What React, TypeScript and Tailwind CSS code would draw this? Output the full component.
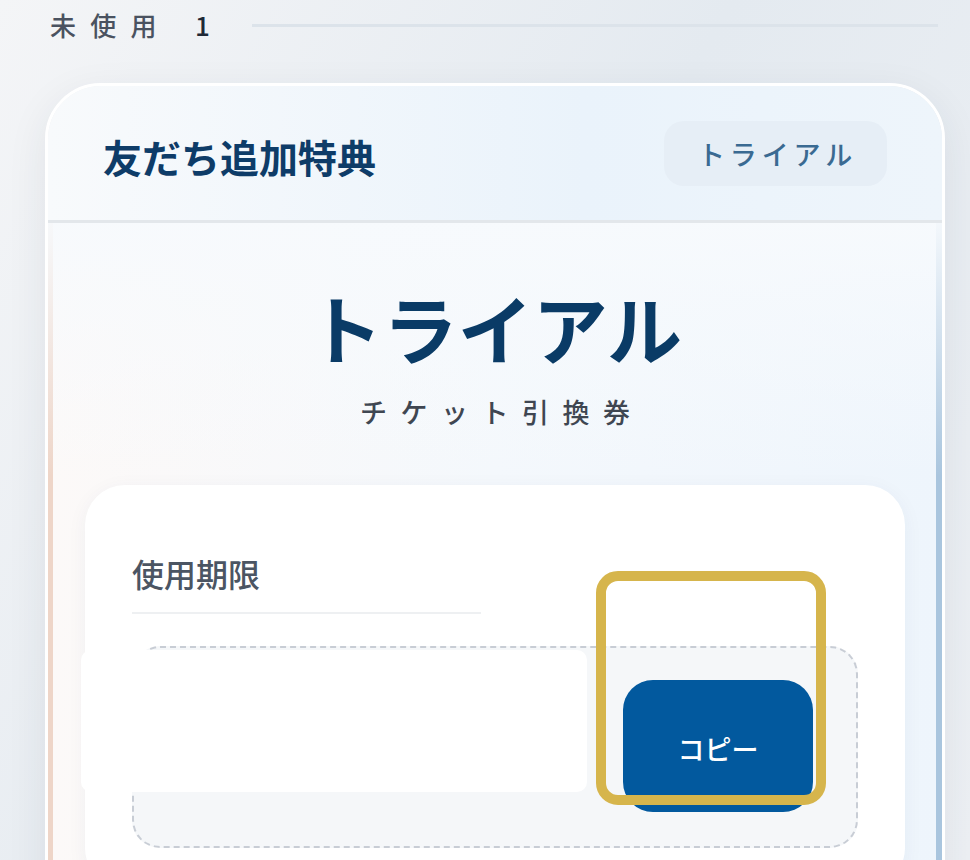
import React from "react";

const jp = { fontFamily: '"Noto Sans CJK JP", "Noto Sans", sans-serif' };

export default function App() {
  return (
    <div
      className="relative w-[970px] h-[860px] overflow-hidden bg-[linear-gradient(120deg,#f4f5f7_0%,#e4eaf0_50%,#edf0f4_100%)]"
      style={jp}
    >
      {/* status row */}
      <div className="flex items-center h-[50px] pl-[50px] pr-[32px]">
        <span className="text-[26px] font-medium tracking-[0.55em] text-[#4a5260] leading-none">未使用</span>
        <span className="ml-[24px] text-[26px] font-medium text-[#1f2937] leading-none">1</span>
        <div className="ml-[42px] flex-1 h-[3px] bg-[#dce3ea]" />
      </div>

      {/* ticket card */}
      <div className="mt-[33px] ml-[45px] w-[900px] rounded-[56px] border-[3px] border-white shadow-[0_12px_40px_rgba(40,50,70,0.08)] overflow-hidden">
        <div className="flex items-center justify-between h-[134px] px-[55px] bg-[linear-gradient(90deg,#f8fafc_0%,#eaf3fb_60%,#eef5fb_100%)]">
          <h2 className="mt-[6px] text-[39px] font-semibold text-[#0e3c68] leading-none">友だち追加特典</h2>
          <span className="flex items-center h-[65px] pl-[34px] pr-[30px] rounded-[20px] bg-[#e6eef6] text-[27px] font-medium tracking-[0.18em] text-[#3a6a92] leading-none">
            トライアル
          </span>
        </div>
        <div className="h-[3px] bg-[#e3e7eb]" />

        <div className="flex flex-col items-center pb-[60px] bg-[linear-gradient(180deg,rgba(247,250,253,0.95)_0%,rgba(247,250,253,0)_35%),linear-gradient(90deg,#eed5c8_0px,#eed5c8_5px,#fcf9f8_5px,#f4f8fc_50%,#eef5fc_calc(100%_-_6px),#a9c5de_calc(100%_-_6px))]">
          <h1 className="mt-[66px] text-[75px] font-bold text-[#0a3b66] leading-none">トライアル</h1>
          <p className="mt-[34px] pl-[0.5em] text-[27px] font-medium tracking-[0.5em] text-[#3f4651] leading-none">
            チケット引換券
          </p>

          <div className="mt-[60px] w-[820px] rounded-[40px] bg-white shadow-[0_4px_20px_rgba(40,60,90,0.05)] px-[47px] pt-[72px] pb-[40px]">
            <div className="text-[32px] font-medium text-[#4b5563] leading-none">使用期限</div>
            <div className="mt-[23px] w-[349px] h-[2px] bg-[#eef0f2]" />
            <div className="mt-[32px] flex justify-end h-[202px] rounded-[28px] border-2 border-dashed border-[#c8cdd5] bg-[#f5f7f9] pt-[32px] pr-[43px]">
              <button className="w-[190px] h-[132px] rounded-[30px] bg-[#02599e] text-white text-[27px] font-medium leading-none pt-[4px]">
                コピー
              </button>
            </div>
          </div>
        </div>
      </div>

      {/* overlays */}
      <div className="absolute left-[81px] top-[650px] w-[506px] h-[142px] rounded-[10px] bg-white" />
      <div className="absolute left-[596px] top-[571px] w-[230px] h-[234px] rounded-[22px] border-[10px] border-[#d6b54c]" />
    </div>
  );
}
